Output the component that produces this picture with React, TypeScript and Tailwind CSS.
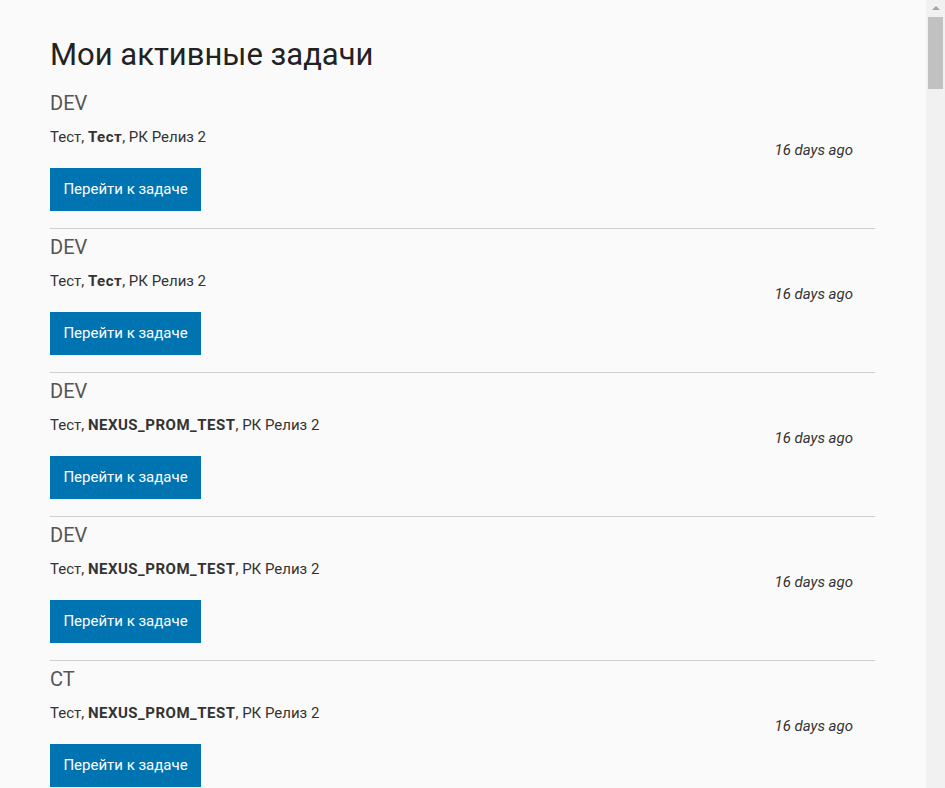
const tasks = [
  { env: 'DEV', project: 'Тест', release: 'РК Релиз 2', ago: '16 days ago' },
  { env: 'DEV', project: 'Тест', release: 'РК Релиз 2', ago: '16 days ago' },
  { env: 'DEV', project: 'NEXUS_PROM_TEST', release: 'РК Релиз 2', ago: '16 days ago' },
  { env: 'DEV', project: 'NEXUS_PROM_TEST', release: 'РК Релиз 2', ago: '16 days ago' },
  { env: 'CT', project: 'NEXUS_PROM_TEST', release: 'РК Релиз 2', ago: '16 days ago' },
  { env: 'CT', project: 'NEXUS_PROM_TEST', release: 'РК Релиз 2', ago: '16 days ago' },
  { env: 'CT', project: 'NEXUS_PROM_TEST', release: 'РК Релиз 2', ago: '16 days ago' },
  { env: 'IFT', project: 'NEXUS_PROM_TEST', release: 'РК Релиз 2', ago: '17 days ago' },
  { env: 'IFT', project: 'NEXUS_PROM_TEST', release: 'РК Релиз 2', ago: '17 days ago' },
  { env: 'IFT', project: 'NEXUS_PROM_TEST', release: 'РК Релиз 2', ago: '17 days ago' },
];

function FakeScrollbar() {
  // headless browser hides the real one, so draw it on top
  return (
    <div className="fixed top-0 right-0 h-screen w-[19px] bg-[#f1f1f1]">
      <div className="mx-auto mt-[6px] h-0 w-0 border-x-[4px] border-b-[4px] border-x-transparent border-b-[#a3a3a3]" />
      <div className="mx-[2px] mt-[7px] h-[72px] bg-[#c1c1c1]" />
    </div>
  );
}

export default function App() {
  return (
    <div className="min-h-screen bg-[#fafafa] font-['Roboto',sans-serif] text-[#333]">
      <div className="ml-[50px] w-[825px] pt-[35px] pb-10">
        <h1 className="mb-[10px] text-[31px] leading-[40px] font-normal text-[#222]">
          Мои активные задачи
        </h1>

        {tasks.map((t, i) => (
          <div
            key={i}
            className="flex items-center justify-between border-b border-[#cfcfcf] pt-[4px] pb-[17px] pr-[22px]"
          >
            <div>
              <div className="text-[20px] leading-[28px] text-[#555]">{t.env}</div>
              <p className="mt-[9px] text-[15px] leading-[22px]">
                Тест, <span className="font-bold tracking-[0.5px]">{t.project}</span>, {t.release}
              </p>
              <button className="mt-[20px] h-[43px] w-[151px] bg-[#0073b1] text-[15px] text-white">
                Перейти к задаче
              </button>
            </div>
            <span className="text-[15px] leading-[22px] italic">{t.ago}</span>
          </div>
        ))}
      </div>
      <FakeScrollbar />
    </div>
  );
}
